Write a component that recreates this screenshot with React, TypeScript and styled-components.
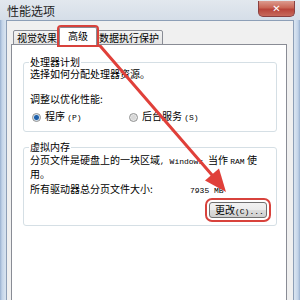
import React from "react";
import styled, { createGlobalStyle } from "styled-components";

const GlobalStyle = createGlobalStyle`
  html, body { margin: 0; padding: 0; background: #ffffff; }
  body { font-family: "Noto Sans CJK SC", "Noto Sans", sans-serif; color: #000; }
  * { box-sizing: border-box; }
`;

const Window = styled.div`
  position: relative;
  width: 300px;
  height: 300px;
  overflow: hidden;
  display: flex;
  flex-direction: column;
  background: linear-gradient(
    to right,
    #98b0cf 0px,
    #c2d3e8 2px,
    #d6e2ef 5px,
    #d6e2ef 295px,
    #c2d3e8 298px,
    #98b0cf 300px
  );
`;

const TitleBar = styled.div`
  height: 20px;
  display: flex;
  align-items: flex-start;
  padding-left: 7px;
  background: linear-gradient(to bottom, #e2e8ee, #d5dee8);
`;

const Title = styled.div`
  font-size: 12px;
  line-height: 14px;
  padding-top: 4px;
  color: #1e1e1e;
`;

const CloseButton = styled.div`
  margin-left: auto;
  margin-right: 5px;
  margin-top: 1px;
  width: 37px;
  height: 16px;
  border: 1px solid #8a4040;
  border-top: none;
  border-radius: 0 0 5px 5px;
  background: linear-gradient(to bottom, #dc9a8e 0%, #c96555 45%, #b8443a 55%, #c76a5c 100%);
  color: #fff;
  font-family: "DejaVu Sans", sans-serif;
  font-size: 10px;
  font-weight: bold;
  line-height: 15px;
  text-align: center;
`;

const ClientArea = styled.div`
  flex: 1;
  margin: 0 6px;
  background: #f0f0f0;
  border: 1px solid #8d9fb7;
  border-bottom: none;
  display: flex;
  flex-direction: column;
  padding: 6px 6px 0 4px;
`;

const TabStrip = styled.div`
  display: flex;
  align-items: flex-end;
  height: 18px;
  margin-bottom: -1px;
  padding-left: 2px;
  position: relative;
  z-index: 1;
`;

const Tab = styled.div<{ $active?: boolean }>`
  height: ${(p) => (p.$active ? 18 : 15)}px;
  padding: 0 ${(p) => (p.$active ? 8 : 3)}px;
  margin: 0 ${(p) => (p.$active ? -2 : 0)}px;
  border: 1px solid #898c95;
  border-bottom: ${(p) => (p.$active ? "none" : "1px solid #898c95")};
  border-radius: 2px 2px 0 0;
  background: ${(p) => (p.$active ? "#ffffff" : "linear-gradient(to bottom, #f3f3f3, #e4e4e4)")};
  font-size: 10px;
  line-height: ${(p) => (p.$active ? 16 : 13)}px;
  white-space: nowrap;
  position: relative;
  z-index: ${(p) => (p.$active ? 2 : 1)};
  outline: ${(p) => (p.$active ? "2px solid #d8423c" : "none")};
  outline-offset: 0px;
`;

const Panel = styled.div`
  flex: 1;
  background: #ffffff;
  border: 1px solid #898c95;
  border-bottom: none;
  padding: 11px 9px 0 11px;
  display: flex;
  flex-direction: column;
`;

const Group = styled.fieldset<{ $gap?: number }>`
  margin: ${(p) => p.$gap ?? 0}px 0 0 0;
  padding: 0 6px 7px 6px;
  border: 1px solid #d5dfe5;
  border-radius: 3px;
  min-width: 0;
`;

const Legend = styled.legend`
  font-size: 10px;
  line-height: 12px;
  padding: 0 1px;
  margin-left: -1px;
`;

const Line = styled.div<{ $top?: number }>`
  font-size: 10px;
  line-height: 12px;
  margin-top: ${(p) => p.$top ?? 0}px;
  white-space: nowrap;
`;

const Latin = styled.span`
  font-family: "Liberation Mono", monospace;
  font-size: 8px;
`;

const RadioRow = styled.div`
  display: grid;
  grid-template-columns: 97px auto;
  margin-top: 5px;
  font-size: 10px;
  line-height: 12px;
`;

const RadioOption = styled.label`
  display: flex;
  align-items: center;
  gap: 4px;
  white-space: nowrap;
`;

const RadioDot = styled.span<{ $checked?: boolean }>`
  width: 9px;
  height: 9px;
  margin-left: 2px;
  border-radius: 50%;
  border: 1px solid #8e8f8f;
  background: ${(p) =>
    p.$checked
      ? "radial-gradient(circle, #1f5fa8 0 2px, #7fb0e0 2.6px, #e9eef3 3.2px)"
      : "radial-gradient(circle, #d8d8d8 0 2px, #eeeeee 3.5px)"};
  flex: none;
`;

const SizeRow = styled.div`
  display: flex;
  align-items: baseline;
  margin-top: 3px;
  font-size: 10px;
  line-height: 12px;
  white-space: nowrap;
`;

const SizeLabel = styled.span`
  width: 160px;
`;

const ButtonRow = styled.div`
  display: flex;
  justify-content: flex-end;
  padding-right: 3px;
  margin-top: 5px;
`;

const Button = styled.div`
  width: 58px;
  height: 16px;
  border: 1px solid #707070;
  border-radius: 3px;
  background: linear-gradient(to bottom, #f2f2f2 0%, #ebebeb 50%, #dddddd 51%, #cfcfcf 100%);
  font-size: 10px;
  line-height: 14px;
  padding-left: 5px;
  white-space: nowrap;
  outline: 2px solid #d8423c;
  outline-offset: 2px;
`;

const ArrowLayer = styled.svg`
  position: absolute;
  left: 0;
  top: 0;
  width: 300px;
  height: 300px;
  pointer-events: none;
`;

export default function App() {
  return (
    <>
      <GlobalStyle />
      <Window>
        <TitleBar>
          <Title>性能选项</Title>
          <CloseButton>✕</CloseButton>
        </TitleBar>
        <ClientArea>
          <TabStrip>
            <Tab>视觉效果</Tab>
            <Tab $active>高级</Tab>
            <Tab>数据执行保护</Tab>
          </TabStrip>
          <Panel>
            <Group>
              <Legend>处理器计划</Legend>
              <Line>选择如何分配处理器资源。</Line>
              <Line $top={13}>调整以优化性能:</Line>
              <RadioRow>
                <RadioOption>
                  <RadioDot $checked />
                  <span>
                    程序 <Latin>(P)</Latin>
                  </span>
                </RadioOption>
                <RadioOption>
                  <RadioDot />
                  <span>
                    后台服务 <Latin>(S)</Latin>
                  </span>
                </RadioOption>
              </RadioRow>
            </Group>
            <Group $gap={9}>
              <Legend>虚拟内存</Legend>
              <Line $top={1}>
                分页文件是硬盘上的一块区域<Latin>, Windows </Latin>当作 <Latin>RAM</Latin> 使
              </Line>
              <Line>用。</Line>
              <SizeRow>
                <SizeLabel>所有驱动器总分页文件大小:</SizeLabel>
                <Latin>7935 MB</Latin>
              </SizeRow>
              <ButtonRow>
                <Button>
                  更改<Latin>(C)...</Latin>
                </Button>
              </ButtonRow>
            </Group>
          </Panel>
        </ClientArea>
        <ArrowLayer viewBox="0 0 300 300">
          <line x1="95" y1="40" x2="212" y2="175" stroke="#e0403a" strokeWidth="3" strokeLinecap="round" />
          <polygon points="226,192 205,180.5 219,168.5" fill="#e0403a" />
        </ArrowLayer>
      </Window>
    </>
  );
}
